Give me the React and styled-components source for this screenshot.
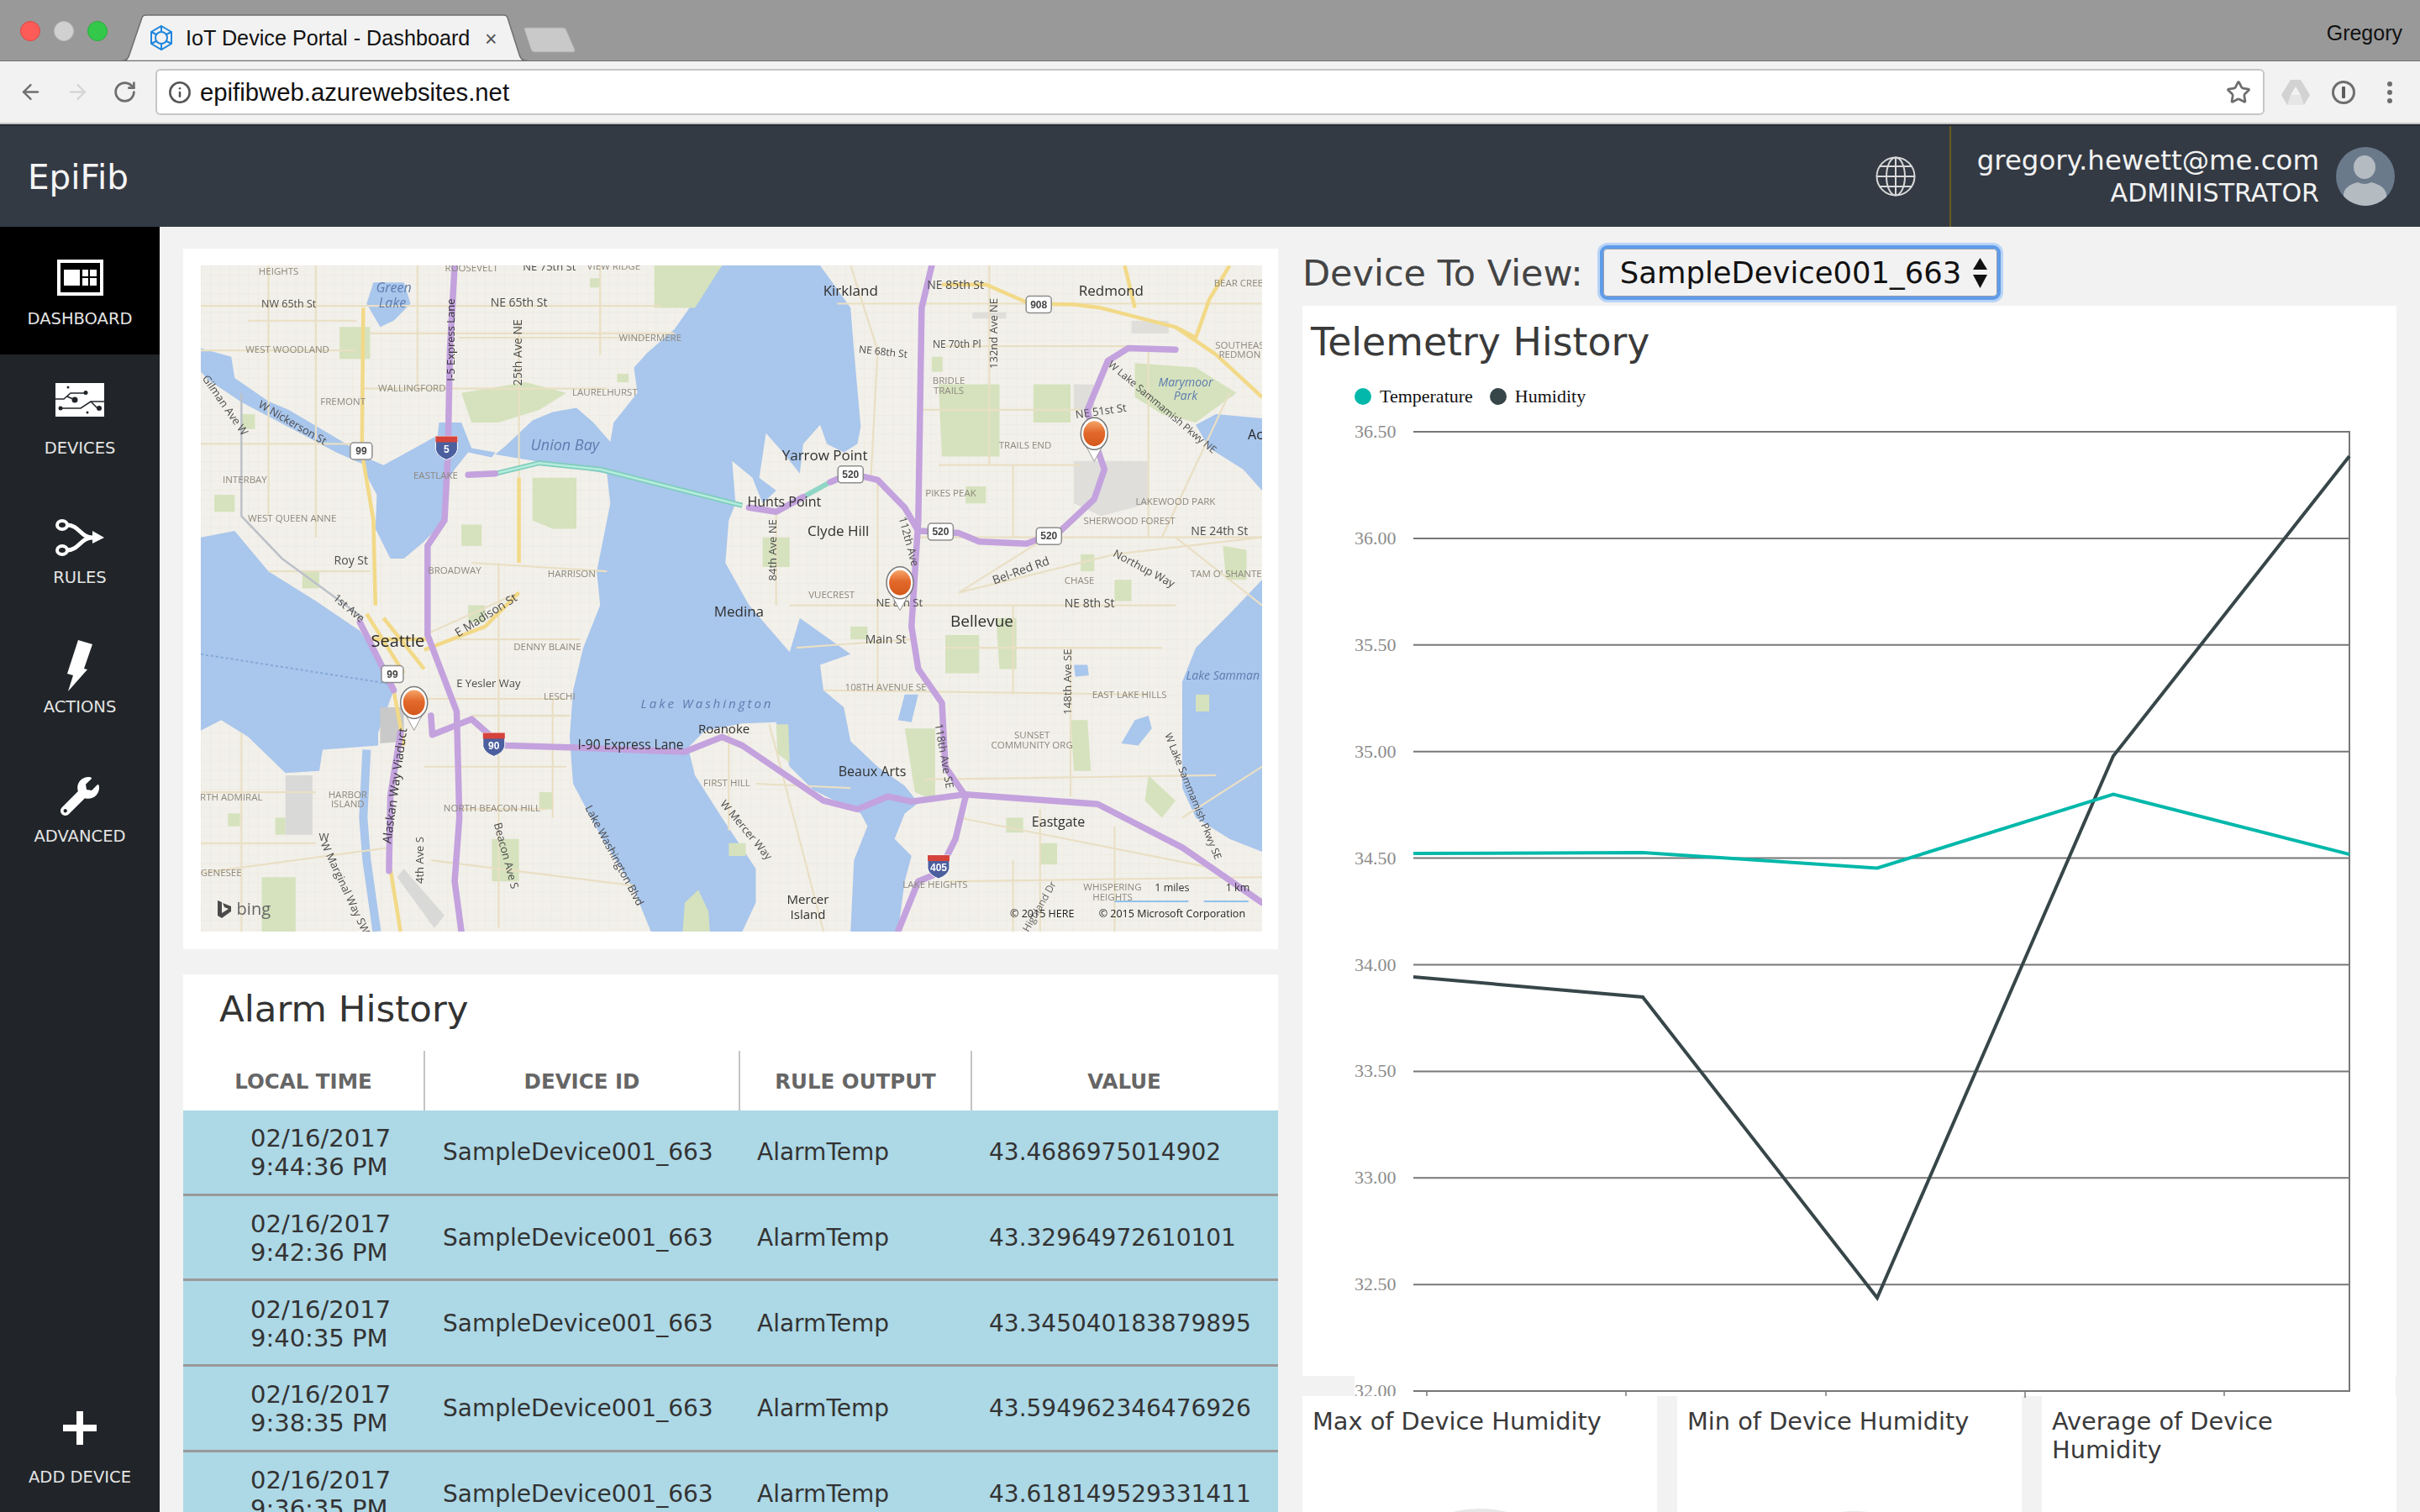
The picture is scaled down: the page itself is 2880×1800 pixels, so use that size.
import React from 'react'
import styled, { createGlobalStyle } from 'styled-components'
import { ArrowLeft, ArrowRight, RotateCw, Info, Star } from 'lucide-react'
import { FaWrench } from 'react-icons/fa'

const UI_FONT = '"DejaVu Sans", Verdana, sans-serif'
const CHROME_FONT = '"Liberation Sans", Arial, sans-serif'
const SERIF_FONT = '"Liberation Serif", "Times New Roman", serif'
const MAP_FONT = '"Open Sans", Arial, sans-serif'

const GlobalStyle = createGlobalStyle`
  html, body { margin: 0; padding: 0; background: #f2f2f2; }
  * { box-sizing: border-box; }
`

const Page = styled.div`
  width: 2880px;
  height: 1800px;
  overflow: hidden;
  display: flex;
  flex-direction: column;
  font-family: ${UI_FONT};
  background: #f2f2f2;
`

/* browser chrome */
const TabStrip = styled.div`
  height: 73px;
  flex: none;
  display: flex;
  align-items: flex-end;
  background: #999999;
  border-bottom: 1px solid #6f6f6f;
`
const Lights = styled.div`
  display: flex;
  gap: 16px;
  margin: 0 17px 23px 24px;
`
const Light = styled.span`
  width: 24px;
  height: 24px;
  border-radius: 50%;
  background: ${({ $color }) => $color};
  border: 1px solid ${({ $edge }) => $edge};
`
const Tab = styled.div`
  position: relative;
  width: 483px;
  height: 56px;
  margin-bottom: -1px;
  padding-left: 31px;
  display: flex;
  align-items: center;
  gap: 13px;
  font-family: ${CHROME_FONT};
  font-size: 25.2px;
  color: #111;
`
const TabShape = styled.svg`
  position: absolute;
  inset: 0;
  z-index: 0;
`
const TabTitle = styled.span`
  position: relative;
  white-space: nowrap;
`
const TabClose = styled.span`
  position: absolute;
  left: 432px;
  top: 15px;
  font-size: 25px;
  color: #555;
`
const NewTab = styled.svg`
  margin: 0 0 9px -6px;
  flex: none;
`
const ProfileName = styled.span`
  margin: 0 21px 18px auto;
  font-family: ${CHROME_FONT};
  font-size: 25px;
  color: #111;
`
const Toolbar = styled.div`
  height: 75px;
  flex: none;
  display: flex;
  align-items: center;
  padding: 0 0 0 22px;
  background: #f2f2f2;
  border-bottom: 2px solid #c4c4c4;
`
const NavIcons = styled.div`
  display: flex;
  gap: 27px;
  color: #6e6e6e;
`
const AddressBar = styled.div`
  width: 2510px;
  height: 55px;
  margin-left: 22px;
  padding: 0 14px 0 13px;
  display: flex;
  align-items: center;
  gap: 10px;
  background: #fff;
  border: 2px solid #c6c6c6;
  border-radius: 6px;
  font-family: ${CHROME_FONT};
  font-size: 29.3px;
  color: #111;
`
const StarSlot = styled.span`
  margin-left: auto;
  display: flex;
  color: #6e6e6e;
`
const Extensions = styled.div`
  display: flex;
  align-items: center;
  margin-left: 20px;
`

/* app header */
const Header = styled.header`
  height: 122px;
  flex: none;
  display: flex;
  align-items: stretch;
  background: #343a44;
  border-top: 2px solid #262a32;
  color: #fff;
`
const Brand = styled.div`
  flex: 1;
  padding-left: 33px;
  font-size: 40.5px;
  line-height: 122px;
  color: #f5f5f5;
`
const GlobeSlot = styled.div`
  width: 88px;
  display: flex;
  align-items: center;
`
const UserBlock = styled.div`
  width: 560px;
  border-left: 2px solid #655d1e;
  display: flex;
  align-items: center;
  justify-content: flex-end;
  gap: 20px;
  padding-right: 30px;
`
const UserText = styled.div`
  text-align: right;
  color: #f2f2f2;
`
const UserMail = styled.div`
  font-size: 32.4px;
  line-height: 38px;
`
const UserRole = styled.div`
  font-size: 30.1px;
  line-height: 39px;
`

/* sidebar */
const Body = styled.div`
  flex: 1;
  min-height: 0;
  display: flex;
`
const Sidebar = styled.nav`
  width: 190px;
  flex: none;
  display: flex;
  flex-direction: column;
  background: #212529;
`
const NavItem = styled.div`
  height: ${({ $active }) => ($active ? 152 : 154)}px;
  flex: none;
  padding-top: ${({ $active }) => ($active ? 30 : 32)}px;
  display: flex;
  flex-direction: column;
  align-items: center;
  background: ${({ $active }) => ($active ? '#000' : 'transparent')};
  ${({ $bottom }) => $bottom && 'margin-top: auto; padding-top: 0; height: 130px;'}
`
const IconSlot = styled.div`
  height: 60px;
  display: flex;
  align-items: center;
  justify-content: center;
  color: #fff;
  transform: translateY(${({ $dy }) => $dy || 0}px);
`
const NavLabel = styled.div`
  margin-top: ${({ $gap }) => $gap || 8}px;
  font-size: 19.5px;
  line-height: 24px;
  color: #e4e4e4;
  white-space: nowrap;
`

/* content */
const Main = styled.main`
  flex: 1;
  display: flex;
  gap: 29px;
  padding: 22px 28px 0;
  min-width: 0;
`
const LeftColumn = styled.div`
  width: 1303px;
  flex: none;
  padding-top: 4px;
  display: flex;
  flex-direction: column;
  gap: 30px;
`
const RightColumn = styled.div`
  width: 1302px;
  flex: none;
  display: flex;
  flex-direction: column;
`
const MapCard = styled.section`
  flex: none;
  padding: 20px;
  padding-left: 21px;
  padding-bottom: 21px;
  background: #fff;
`
const MapSvg = styled.svg`
  display: block;
  width: 1263px;
  height: 793px;
  filter: blur(0.7px);
`
const MapText = styled.text`
  font-family: ${MAP_FONT};
  text-anchor: middle;
  dominant-baseline: middle;
  font-size: ${({ $size }) => $size}px;
  fill: ${({ $fill }) => $fill};
  font-style: ${({ $italic }) => ($italic ? 'italic' : 'normal')};
  letter-spacing: ${({ $spread }) => $spread || 0}px;
`
const ShieldText = styled.text`
  font-family: ${CHROME_FONT};
  font-weight: 700;
  font-size: 12px;
  text-anchor: middle;
  dominant-baseline: middle;
  fill: ${({ $fill }) => $fill || '#444'};
`
const AlarmCard = styled.section`
  flex: none;
  background: #fff;
`
const AlarmTitle = styled.h2`
  margin: 0;
  height: 91px;
  padding-left: 43px;
  font-size: 43.5px;
  font-weight: 400;
  line-height: 82px;
  color: #333;
`
const AlarmGrid = styled.div`
  display: grid;
  grid-template-columns: 288px 375px 276px 364px;
`
const HeadCell = styled.div`
  height: 71px;
  padding-top: 2px;
  display: flex;
  align-items: center;
  justify-content: center;
  font-size: 24.5px;
  font-weight: 700;
  color: #666;
  border-right: 2px solid ${({ $last }) => ($last ? 'transparent' : '#c4c4c4')};
`
const Cell = styled.div`
  height: 101.67px;
  display: flex;
  flex-direction: column;
  justify-content: center;
  padding-top: 2px;
  padding-left: ${({ $pad }) => $pad}px;
  background: #add8e6;
  border-bottom: 3px solid #999;
  font-size: ${({ $size }) => $size || 28}px;
  line-height: 34px;
  color: #333;
  white-space: nowrap;
`
const DeviceBar = styled.div`
  height: 65px;
  flex: none;
  display: flex;
  align-items: center;
  gap: 20px;
  margin-bottom: 7px;
`
const DeviceLabel = styled.div`
  font-size: 43px;
  color: #444;
`
const DeviceSelect = styled.div`
  width: 477px;
  height: 65px;
  padding: 0 12px 0 20px;
  display: flex;
  align-items: center;
  justify-content: space-between;
  background: #f2f2f2;
  border: 4px solid #5f9ce8;
  border-radius: 9px;
  box-shadow: 0 0 0 3px #b9d4f6, inset 0 0 0 1px #8f9db3;
  font-size: 35.4px;
  color: #111;
`
const ChartCard = styled.section`
  height: 1274px;
  flex: none;
  background: #fff;
`
const ChartTitle = styled.h2`
  margin: 0;
  height: 88px;
  padding-left: 10px;
  font-size: 45.8px;
  font-weight: 400;
  line-height: 86px;
  color: #3a3a3a;
`
const Legend = styled.div`
  height: 40px;
  padding-left: 62px;
  display: flex;
  align-items: center;
  font-family: ${SERIF_FONT};
  font-size: 22px;
  color: #111;
`
const LegendDot = styled.span`
  width: 20px;
  height: 20px;
  margin-right: 10px;
  border-radius: 50%;
  background: ${({ $color }) => $color};
`
const LegendLabel = styled.span`
  margin-right: 20px;
`
const ChartSvg = styled.svg`
  display: block;
  width: 1302px;
  height: 1146px;
  overflow: visible;
`
const AxisText = styled.text`
  font-family: ${SERIF_FONT};
  font-size: 22px;
  fill: #8c8c8c;
`
const TileRow = styled.div`
  position: relative;
  z-index: 1;
  margin-top: 24px;
  display: flex;
  gap: 24px;
`
const Tile = styled.div`
  flex: ${({ $narrow }) => ($narrow ? '0 0 410px' : '0 0 422px')};
  height: 300px;
  padding: 13px 12px 0;
  overflow: hidden;
  background: #fff;
`
const TileTitle = styled.div`
  height: ${({ $gap }) => $gap}px;
  font-size: 28.8px;
  line-height: 34px;
  color: #3a3a3a;
`
const GaugeArc = styled.div`
  width: 264px;
  height: 264px;
  margin-left: 67px;
  border-radius: 50%;
  background: #e7e7e7;
`

/* map data, points in the 1568 x 1568 working space of the map */
const SX = 1263 / 1568
const SY = 793 / 1568

const water = [
  '760,0 735,70 700,150 660,205 640,240 645,300 610,370 605,415 580,370 555,335 520,345 490,365 470,395 450,425 435,445 500,462 600,490 605,560 585,720 590,800 565,900 550,1000 545,1110 550,1220 590,1340 640,1470 665,1568 1030,1568 1040,1450 1050,1390 1025,1350 1040,1290 1060,1265 1040,1225 1000,1180 960,1120 950,1040 920,1000 915,940 960,915 885,830 870,910 810,800 775,700 780,600 790,560 785,460 815,500 830,560 850,530 825,500 835,395 860,440 885,490 890,420 915,375 925,420 950,440 970,420 975,380 965,200 960,100 915,0',
  '240,450 270,470 350,400 352,370 385,370 400,430 435,440 430,452 395,440 375,480 360,520 360,600 330,650 300,690 280,690 258,620 260,540 240,480',
  '0,195 45,215 50,265 100,320 130,340 215,420 240,450 240,468 200,440 120,372 60,322 10,268 0,250',
  '0,640 50,625 100,720 170,790 235,860 260,920 285,1000 262,1100 262,1130 180,1140 175,1190 125,1195 70,1110 30,1070 0,1095',
  '255,40 300,40 310,90 285,130 265,145 245,90',
  '1470,375 1500,350 1568,360 1568,530 1540,480 1490,430',
  '1568,740 1520,820 1470,900 1450,980 1450,1230 1470,1300 1520,1350 1568,1380',
  '1380,1070 1400,1060 1405,1090 1385,1130 1360,1125',
  '1290,940 1310,940 1312,965 1292,968',
  '1040,1010 1060,1010 1050,1075 1030,1070',
]
const mercer = '720,1135 745,1095 800,1078 850,1075 870,1180 905,1235 975,1290 985,1320 965,1400 960,1568 800,1568 820,1500 820,1420 770,1300 730,1200'
const parks = [
  '205,145 250,145 250,220 205,220',
  '385,300 480,275 540,300 500,340 440,370 400,370',
  '490,500 555,500 555,620 520,620 490,600',
  '385,610 415,610 415,660 385,660',
  '670,0 770,0 730,100 670,100',
  '1090,280 1180,280 1180,450 1095,450',
  '1230,280 1285,280 1285,370 1230,370',
  '1380,230 1470,240 1530,300 1470,370 1420,350 1380,310',
  '1100,870 1150,870 1150,960 1100,960',
  '1175,830 1205,830 1205,950 1180,950',
  '1040,1090 1085,1090 1085,1260 1055,1240',
  '1285,1070 1310,1070 1315,1190 1290,1190',
  '430,1350 470,1350 470,1450 430,1450',
  '90,1440 140,1440 140,1568 90,1568',
  '712,1568 715,1500 735,1470 750,1520 752,1568',
  '830,640 870,640 870,710 830,710',
  '1510,660 1545,670 1545,740 1515,740',
  '850,1080 868,1080 870,1170 852,1150',
  '1400,1200 1440,1260 1420,1300 1395,1260',
  '150,720 175,720 175,760 150,760', '575,30 590,30 590,52 575,52', '1080,215 1096,215 1096,250 1080,250',
  '1130,520 1160,520 1160,560 1130,560', '60,350 80,350 80,385 60,385', '110,1300 125,1300 125,1340 110,1340',
  '395,800 420,800 420,840 395,840', '1300,680 1320,680 1320,720 1300,720', '960,850 985,850 985,880 960,880',
  '1190,1300 1215,1300 1215,1335 1190,1335', '1240,1360 1265,1360 1265,1410 1240,1410', '500,1240 520,1240 520,1280 500,1280',
  '1350,740 1375,740 1375,790 1350,790', '780,1360 805,1360 805,1390 780,1390', '40,1290 58,1290 58,1320 40,1320',
  '20,540 50,540 50,580 20,580', '615,255 632,255 632,275 615,275', '1470,1010 1490,1010 1490,1050 1470,1050',
]
const blocks = [
  '1290,460 1400,460 1400,560 1330,590 1290,560',
  '1290,280 1320,280 1320,340 1290,340',
  '1140,110 1190,110 1190,125 1140,125',
  '1375,130 1430,130 1430,160 1375,160',
]
const arterials = [
  '0,95 680,95', '0,200 230,200', '240,290 600,290', '940,90 1568,90', '1060,640 1568,640',
  '870,800 1440,800', '330,1020 540,1020', '920,1000 1400,1010', '1120,770 1350,680 1568,640',
  '470,130 470,700', '170,0 170,640', '1165,0 1165,470', '1285,900 1285,1250', '1000,500 1000,1000',
  '850,580 850,800', '400,700 600,720', '1070,1210 1500,1200', '0,1430 280,1370', '330,1180 540,1180',
  '380,1280 510,1280', '820,1220 960,1230', '1200,1400 1200,1568', '1350,1320 1350,1568', '590,0 590,210',
  '330,870 470,770', '100,720 250,720', '1400,200 1400,640', '1520,300 1420,640',
  '100,0 100,590', '320,0 320,290', '0,420 230,420', '380,170 660,170', '250,160 700,160', '70,130 230,130',
  '960,0 1000,200 990,500', '1200,470 1200,640', '1090,470 1300,470', '1060,340 1300,340', '1100,190 1380,190',
  '1440,640 1568,800', '1250,640 1120,770', '880,900 1050,880', '1100,900 1420,900', '1200,800 1200,1010',
  '380,880 560,880', '400,1060 545,1060', '440,700 440,1560', '520,1020 520,1300', '340,1400 640,1460',
  '170,1240 0,1240', '60,1100 60,1568', '0,1360 170,1360', '780,1100 780,1330', '840,1080 920,1568',
  '1120,1300 1500,1420', '1100,1450 1568,1440', '1240,1280 1240,1568', '1450,1300 1568,1180',
]
const yellows = [
  '240,100 238,440 255,600 258,800', '330,905 420,850 470,770', '285,1000 300,1130', '280,1420 295,1568',
  '1095,45 1160,45 1225,90 1290,92 1330,100 1440,145 1470,170 1490,80 1520,0', '1365,0 1380,100',
  '1500,210 1568,310', '470,500 470,700', '245,820 300,960', '270,830 330,950', '250,880 340,880', '1440,145 1500,210',
]
const highways = [
  '375,0 368,200 365,450 360,600 335,660 335,870 378,1050 382,1300 375,1450 385,1568',
  '235,840 265,935 285,1000', '295,1100 280,1250 278,1425',
  '340,1060 342,1105 400,1068 430,1110 450,1130 555,1135 715,1145 770,1110 800,1130 920,1260 970,1280 1015,1250 1050,1262 1130,1245 1325,1268 1450,1370 1568,1500',
  '1080,0 1065,100 1060,600 1050,850 1060,950 1095,1030 1100,1180 1130,1250 1115,1350 1090,1430 1060,1450 1030,1568',
  '395,493 435,490', '810,570 850,580 890,545',
  '930,510 960,490 1000,505 1040,570 1060,625 1120,630 1150,650 1220,655 1270,625 1320,550 1335,480 1320,410 1310,340 1340,225 1370,195 1440,198',
]
const CAPS = ['#8d887e', 11.5]
const STREET = ['#4c4c4c', 13]
const CITY = ['#303030', 17]
const labels = [
  ['HEIGHTS', 115, 15, CAPS], ['ROOSEVELT', 400, 8, CAPS], ['NE 75th St', 515, 5, STREET], ['VIEW RIDGE', 610, 3, CAPS],
  ['NW 65th St', 130, 93, ['#4c4c4c', 12.5]], ['NE 65th St', 470, 90, ['#4c4c4c', 14]], ['25th Ave NE', 470, 205, ['#4c4c4c', 14], -90],
  ['I-5 Express Lane', 370, 175, ['#333', 13], -90], ['WEST WOODLAND', 128, 200, CAPS], ['WINDERMERE', 664, 172, CAPS],
  ['WALLINGFORD', 312, 290, CAPS], ['LAURELHURST', 597, 300, CAPS], ['FREMONT', 210, 323, CAPS], ['INTERBAY', 65, 507, CAPS],
  ['Gilman Ave W', 35, 330, STREET, 55], ['W Nickerson St', 135, 372, STREET, 30], ['EASTLAKE', 347, 496, CAPS],
  ['WEST QUEEN ANNE', 135, 597, CAPS], ['Roy St', 222, 697, ['#4c4c4c', 14]], ['BROADWAY', 375, 720, CAPS], ['HARRISON', 548, 727, CAPS],
  ['1st Ave', 218, 808, STREET, 40], ['E Madison St', 422, 825, ['#4c4c4c', 14], -32], ['Seattle', 291, 888, ['#2b2b2b', 20]],
  ['DENNY BLAINE', 512, 900, CAPS], ['E Yesler Way', 425, 985, STREET], ['LESCHI', 530, 1017, CAPS],
  ['I-90 Express Lane', 635, 1130, ['#2f2f2f', 15.5]], ['Alaskan Way Viaduct', 288, 1225, ['#333', 14.5], -82], ['4th Ave S', 325, 1400, STREET, -90],
  ['NORTH BEACON HILL', 430, 1280, CAPS], ['HARBOR', 217, 1247, CAPS], ['ISLAND', 217, 1270, CAPS], ['RTH ADMIRAL', 45, 1253, CAPS],
  ['GENESEE', 30, 1432, CAPS], ['W Marginal Way SW', 212, 1465, STREET, 65], ['Beacon Ave S', 450, 1390, STREET, 75],
  ['Lake Washington Blvd', 610, 1390, STREET, 62], ['W', 182, 1347, STREET],
  ['Kirkland', 960, 62, CITY], ['NE 85th St', 1115, 47, ['#4c4c4c', 14]], ['Redmond', 1345, 62, CITY], ['BEAR CREE', 1533, 43, CAPS],
  ['132nd Ave NE', 1173, 160, STREET, -90], ['NE 70th Pl', 1117, 187, ['#4c4c4c', 12]], ['NE 68th St', 1008, 205, ['#4c4c4c', 12], 6],
  ['BRIDLE', 1105, 272, CAPS], ['TRAILS', 1105, 296, CAPS], ['SOUTHEAS', 1535, 190, CAPS], ['REDMON', 1535, 212, CAPS],
  ['W Lake Sammamish Pkwy NE', 1420, 335, ['#4c4c4c', 12], 40], ['NE 51st St', 1330, 345, STREET, -8], ['Ac', 1558, 400, ['#222', 16]],
  ['TRAILS END', 1218, 424, CAPS], ['Yarrow Point', 922, 450, CITY], ['Hunts Point', 862, 560, ['#303030', 16]], ['PIKES PEAK', 1108, 537, CAPS],
  ['LAKEWOOD PARK', 1440, 558, CAPS], ['SHERWOOD FOREST', 1372, 603, CAPS], ['Clyde Hill', 942, 628, CITY], ['84th Ave NE', 846, 670, STREET, -90],
  ['112th Ave', 1045, 650, STREET, 75], ['NE 24th St', 1505, 628, ['#4c4c4c', 14]], ['Northup Way', 1393, 715, STREET, 28],
  ['Bel-Red Rd', 1212, 720, ['#4c4c4c', 14], -20], ['CHASE', 1298, 743, CAPS], ["TAM O' SHANTE", 1515, 727, CAPS], ['VUECREST', 932, 777, CAPS],
  ['NE 8th St', 1032, 795, STREET], ['NE 8th St', 1313, 797, ['#4c4c4c', 14]], ['Medina', 795, 818, CITY], ['Bellevue', 1154, 840, ['#303030', 19]],
  ['Main St', 1012, 883, ['#4c4c4c', 14]], ['148th Ave SE', 1282, 980, STREET, -90], ['108TH AVENUE SE', 1012, 995, CAPS], ['EAST LAKE HILLS', 1372, 1012, CAPS],
  ['SUNSET', 1228, 1107, CAPS], ['COMMUNITY ORG', 1228, 1130, CAPS], ['Roanoke', 773, 1093, ['#303030', 15]], ['118th Ave SE', 1097, 1155, STREET, 80],
  ['Beaux Arts', 992, 1193, ['#303030', 16]], ['FIRST HILL', 777, 1220, CAPS], ['W Mercer Way', 805, 1330, STREET, 50], ['Eastgate', 1267, 1312, ['#303030', 16]],
  ['W Lake Sammamish Pkwy SE', 1465, 1250, ['#4c4c4c', 12], 68], ['LAKE HEIGHTS', 1085, 1460, CAPS], ['WHISPERING', 1347, 1465, CAPS], ['HEIGHTS', 1347, 1488, CAPS],
  ['Mercer', 897, 1495, ['#303030', 15]], ['Island', 897, 1530, ['#303030', 15]], ['Highland Dr', 1240, 1510, ['#666', 12], -60],
  ['1 miles', 1435, 1467, ['#333', 12.5]], ['1 km', 1532, 1467, ['#333', 12.5]], ['© 2015 HERE', 1243, 1528, ['#222', 12.5]], ['© 2015 Microsoft Corporation', 1435, 1528, ['#222', 12.5]],
  ['bing', 78, 1517, ['#666', 20]],
]
const waterLabels = [
  ['Green', 285, 55, 16], ['Lake', 283, 90, 16], ['Union Bay', 538, 425, 18], ['Lake Washington', 748, 1035, 15, 3],
  ['Lake Samman', 1510, 968, 14], ['Marymoor', 1455, 278, 14], ['Park', 1455, 308, 14],
]
const shields = [['99', 237, 437], ['99', 283, 962], ['908', 1238, 92], ['520', 960, 492], ['520', 1093, 627], ['520', 1253, 637]]
const interstates = [['5', 363, 422], ['90', 433, 1120], ['405', 1090, 1408]]
const pins = [[1320, 392], [1033, 743], [315, 1025]]

const SeattleMap = () => (
  <MapSvg viewBox="0 0 1263 793">
    <defs>
      <pattern id="streets" width="14" height="22" patternUnits="userSpaceOnUse">
        <path d="M0 0H14M0 0V22" stroke="#e6e2d8" strokeWidth="1" fill="none" />
      </pattern>
      <linearGradient id="pinFill" x1="0" y1="0" x2="0" y2="1">
        <stop offset="0" stopColor="#f6a468" />
        <stop offset="0.45" stopColor="#e2692b" />
        <stop offset="1" stopColor="#d4581c" />
      </linearGradient>
    </defs>
    <g transform={`scale(${SX} ${SY})`}>
      <rect width="1568" height="1568" fill="#f2f0ea" />
      <rect width="1568" height="1568" fill="url(#streets)" />
      {blocks.map((p) => <polygon key={p} points={p} fill="#dfdedb" />)}
      {water.map((p) => <polygon key={p} points={p} fill="#a9c6ec" />)}
      <polygon points={mercer} fill="#f2f0ea" />
      <polygon points={mercer} fill="url(#streets)" />
      <polygon points="125,1200 165,1200 165,1340 125,1340" fill="#d9d9d8" />
      <polygon points="265,1040 300,1040 300,1120 265,1125" fill="#c9c9c9" />
      <polygon points="300,1420 360,1530 345,1560 290,1440" fill="#d9d9d8" />
      <polyline points="245,1140 240,1300 245,1400 260,1568" fill="none" stroke="#a9c6ec" strokeWidth="10" vectorEffect="non-scaling-stroke" />
      {parks.map((p) => <polygon key={p} points={p} fill="#d5e2bd" />)}
      {arterials.map((p) => (
        <polyline key={p} points={p} fill="none" stroke="#e9dfc4" strokeWidth="2.2" vectorEffect="non-scaling-stroke" />
      ))}
      <polyline points="60,300 60,590 120,690 240,830" fill="none" stroke="#bcc0c9" strokeWidth="2.5" vectorEffect="non-scaling-stroke" />
      <polyline points="0,915 280,985" fill="none" stroke="#84a8d8" strokeWidth="2" strokeDasharray="3 3" vectorEffect="non-scaling-stroke" />
      {yellows.map((p) => (
        <polyline key={p} points={p} fill="none" stroke="#f2d987" strokeWidth="4.5" strokeLinejoin="round" vectorEffect="non-scaling-stroke" />
      ))}
      <polyline points="435,490 500,465 590,480 800,565" fill="none" stroke="#7fcdbd" strokeWidth="6" strokeLinejoin="round" vectorEffect="non-scaling-stroke" />
      <polyline points="435,490 500,465 590,480 800,565" fill="none" stroke="#b5ecdd" strokeWidth="2.5" strokeLinejoin="round" vectorEffect="non-scaling-stroke" />
      <polyline points="890,545 930,510" fill="none" stroke="#8fd6c6" strokeWidth="6" vectorEffect="non-scaling-stroke" />
      {highways.map((p) => (
        <polyline key={p} points={p} fill="none" stroke="#c3a2de" strokeWidth="7.5" strokeLinejoin="round" strokeLinecap="round" vectorEffect="non-scaling-stroke" />
      ))}
    </g>
    {labels.map(([text, u, v, [fill, size], rot]) => {
      const x = u * SX
      const y = v * SY
      return (
        <MapText key={`${text}${u}`} x={x} y={y} $size={size} $fill={fill} transform={rot ? `rotate(${rot} ${x} ${y})` : undefined}>
          {text}
        </MapText>
      )
    })}
    {waterLabels.map(([text, u, v, size, spread]) => (
      <MapText key={text} x={u * SX} y={v * SY} $size={size} $fill="#5d7cb0" $spread={spread} $italic>
        {text}
      </MapText>
    ))}
    {shields.map(([num, u, v]) => (
      <g key={`${num}${u}`} transform={`translate(${u * SX} ${v * SY})`}>
        <rect x={num.length > 2 ? -15 : -13} y="-10" width={num.length > 2 ? 30 : 26} height="20" rx="4" fill="#fff" stroke="#8d8d8d" strokeWidth="1.5" />
        <ShieldText y="1">{num}</ShieldText>
      </g>
    ))}
    {interstates.map(([num, u, v]) => (
      <g key={num} transform={`translate(${u * SX} ${v * SY})`}>
        <path d="M-13 -10H13V6Q11 14 0 18Q-11 14 -13 6Z" fill="#4b5f9e" stroke="#fff" strokeWidth="1" />
        <path d="M-13 -10H13V-3H-13Z" fill="#d5433a" />
        <ShieldText y="6" $fill="#fff">{num}</ShieldText>
      </g>
    ))}
    <rect x={1350 * SX} y={1495 * SY} width="88" height="2" fill="#8fc0ee" />
    <rect x={1482 * SX} y={1495 * SY} width="53" height="2" fill="#8fc0ee" />
    <path d="M20 756L25 758V771L33 766L28 764L26 759L36 763V769L25 777L20 774Z" fill="#4a4a4a" />
    {pins.map(([u, v]) => (
      <g key={u} transform={`translate(${u * SX} ${v * SY + 3})`}>
        <path d="M-13 8L0 32L13 8Z" fill="#fff" stroke="#999" strokeWidth="1" />
        <ellipse rx="16" ry="19" cy="-1" fill="#fff" stroke="#777" strokeWidth="1.5" />
        <ellipse rx="13" ry="15" cy="-1" fill="url(#pinFill)" />
      </g>
    ))}
  </MapSvg>
)

/* alarm rows */
const alarms = [
  ['02/16/2017', '9:44:36 PM', '43.4686975014902'],
  ['02/16/2017', '9:42:36 PM', '43.32964972610101'],
  ['02/16/2017', '9:40:35 PM', '43.345040183879895'],
  ['02/16/2017', '9:38:35 PM', '43.594962346476926'],
  ['02/16/2017', '9:36:35 PM', '43.618149529331411'],
]
const columns = ['LOCAL TIME', 'DEVICE ID', 'RULE OUTPUT', 'VALUE']

/* chart, in page coordinates */
const yTicks = ['36.50', '36.00', '35.50', '35.00', '34.50', '34.00', '33.50', '33.00', '32.50', '32.00']
const xTicks = [1698, 1935, 2173, 2410, 2647]
const tempLine = '1682,1016 1955,1015 2234,1033.5 2515,945.5 2796,1017'
const humidityLine = '1682,1163 1955,1187 2234,1545 2515,900 2796,543'

const TelemetryChart = () => (
  <ChartSvg viewBox="1550 492 1302 1146">
    <rect x="1612" y="1630" width="1239" height="32" fill="#fff" />
    {yTicks.map((label, i) => {
      const y = 514 + i * 126.9
      return (
        <g key={label}>
          <line x1="1682" x2="2796" y1={y} y2={y} stroke="#777" strokeWidth="2" />
          <AxisText x="1612" y={y + 7}>{label}</AxisText>
        </g>
      )
    })}
    <line x1="2796" x2="2796" y1="513" y2="1657" stroke="#777" strokeWidth="2" />
    {xTicks.map((x) => <line key={x} x1={x} x2={x} y1="1656" y2="1664" stroke="#777" strokeWidth="1.5" />)}
    <polyline points={humidityLine} fill="none" stroke="#374649" strokeWidth="4" />
    <polyline points={tempLine} fill="none" stroke="#01b8aa" strokeWidth="4" />
  </ChartSvg>
)

/* sidebar and toolbar drawings */
const DashboardIcon = () => (
  <svg width="55" height="43" viewBox="0 0 55 43">
    <rect x="2" y="2" width="51" height="39" fill="#000" stroke="#fff" strokeWidth="4" />
    <rect x="8" y="12" width="19" height="19" fill="#fff" />
    <rect x="30" y="12" width="7" height="8" fill="#fff" />
    <rect x="39" y="12" width="8" height="8" fill="#fff" />
    <rect x="30" y="22" width="7" height="9" fill="#fff" />
    <rect x="39" y="22" width="8" height="9" fill="#fff" />
  </svg>
)
const DevicesIcon = () => (
  <svg width="58" height="40" viewBox="0 0 58 40">
    <rect width="58" height="40" fill="#fff" />
    <path d="M0 19H10L18 12H36M14 16L23 20M6 30H30L42 22H58M42 22L50 30" fill="none" stroke="#212529" strokeWidth="1.6" />
    <circle cx="36" cy="11.5" r="2.5" fill="#212529" />
    <circle cx="23" cy="20" r="3.5" fill="#212529" />
    <circle cx="6" cy="30" r="2.5" fill="#212529" />
    <circle cx="52" cy="30" r="3" fill="#212529" />
    <circle cx="15" cy="5" r="1.5" fill="#212529" />
    <circle cx="38" cy="35" r="1.5" fill="#212529" />
  </svg>
)
const RulesIcon = () => (
  <svg width="58" height="45" viewBox="0 0 58 45">
    <ellipse cx="8" cy="7" rx="6" ry="5" fill="none" stroke="#fff" strokeWidth="4" />
    <ellipse cx="8" cy="37" rx="6" ry="5" fill="none" stroke="#fff" strokeWidth="4" />
    <path d="M14 7C28 7 30 22 44 22M14 37C28 37 30 22 44 22" fill="none" stroke="#fff" strokeWidth="5" />
    <polygon points="44,14 58,22 44,29" fill="#fff" />
  </svg>
)
const ActionsIcon = () => (
  <svg width="30" height="61" viewBox="0 0 30 61">
    <polygon points="13,0 30,5 20,34 24,35 1,61 7,42 0,40" fill="#fff" />
  </svg>
)
const PlusIcon = () => (
  <svg width="40" height="40" viewBox="0 0 40 40">
    <path d="M16 0H24V16H40V24H24V40H16V24H0V16H16Z" fill="#fff" />
  </svg>
)
const GlobeIcon = () => (
  <svg width="48" height="48" viewBox="0 0 48 48" fill="none" stroke="#d8d8d8" strokeWidth="2">
    <circle cx="24" cy="24" r="22.5" />
    <ellipse cx="24" cy="24" rx="11" ry="22.5" />
    <path d="M24 1.5V46.5M1.5 24H46.5M5 12H43M5 36H43" />
  </svg>
)
const Favicon = () => (
  <svg width="32" height="32" viewBox="0 0 32 32" fill="none" stroke="#1f86dd" strokeWidth="2" style={{ position: 'relative' }}>
    <polygon points="16,2 28,9 28,23 16,30 4,23 4,9" />
    <circle cx="16" cy="16" r="7" />
    <path d="M16 2V9M28 9L22 12M28 23L22 20M16 30V23M4 23L10 20M4 9L10 12" />
  </svg>
)
const DriveIcon = () => (
  <svg width="34" height="30" viewBox="0 0 34 30" style={{ display: 'block' }}>
    <polygon points="11,0 23,0 34,18 27,30 7,30 0,18" fill="#d2d2d2" />
    <polygon points="11,18 23,18 27,30 7,30" fill="#e6e6e6" />
    <polygon points="17,8 23,18 11,18" fill="#f2f2f2" />
  </svg>
)
const OnePasswordIcon = () => (
  <svg width="30" height="30" viewBox="0 0 30 30" style={{ display: 'block', margin: '0 36px 0 25px' }}>
    <circle cx="15" cy="15" r="12.5" fill="#f2f2f2" stroke="#6e6e6e" strokeWidth="3" />
    <rect x="13" y="8" width="4" height="14" rx="1" fill="#5c5c5c" />
  </svg>
)
const DotsIcon = () => (
  <svg width="8" height="28" viewBox="0 0 8 28" style={{ display: 'block' }}>
    <circle cx="4" cy="4" r="3" fill="#6e6e6e" />
    <circle cx="4" cy="14" r="3" fill="#6e6e6e" />
    <circle cx="4" cy="24" r="3" fill="#6e6e6e" />
  </svg>
)
const Avatar = () => (
  <svg width="70" height="70" viewBox="0 0 70 70" style={{ flex: 'none' }}>
    <defs>
      <clipPath id="avatarClip"><circle cx="35" cy="35" r="35" /></clipPath>
    </defs>
    <circle cx="35" cy="35" r="35" fill="#6a7a8b" />
    <g clipPath="url(#avatarClip)" fill="#b4bbc1">
      <ellipse cx="34" cy="24" rx="13" ry="14" />
      <path d="M9 70V56Q10 46 26 42Q34 46 42 42Q58 46 60 56V70Z" />
    </g>
  </svg>
)
const SelectArrows = () => (
  <svg width="17" height="36" viewBox="0 0 17 36" style={{ display: 'block' }}>
    <polygon points="8.5,0 17,14 0,14" fill="#111" />
    <polygon points="0,20 17,20 8.5,36" fill="#111" />
  </svg>
)

const navItems = [
  { label: 'DASHBOARD', icon: <DashboardIcon />, active: true },
  { label: 'DEVICES', icon: <DevicesIcon />, dy: -8 },
  { label: 'RULES', icon: <RulesIcon />, dy: 2 },
  { label: 'ACTIONS', icon: <ActionsIcon /> },
  { label: 'ADVANCED', icon: <FaWrench size={46} />, dy: 2 },
]

export default function App() {
  return (
    <Page>
      <GlobalStyle />
      <TabStrip>
        <Lights>
          <Light $color="#fc5b57" $edge="#df4744" />
          <Light $color="#d0d0d0" $edge="#bcbcbc" />
          <Light $color="#34c84a" $edge="#2aac3c" />
        </Lights>
        <Tab>
          <TabShape width="483" height="56" viewBox="0 0 483 56">
            <path d="M0 55.5Q7 55.5 9 48L24 4Q25 1 29 1H455Q458 1 459 4L473 48Q475 55.5 483 55.5Z" fill="#f2f2f2" stroke="#6f6f6f" strokeWidth="1.5" />
          </TabShape>
          <Favicon />
          <TabTitle>IoT Device Portal - Dashboard</TabTitle>
          <TabClose>×</TabClose>
        </Tab>
        <NewTab width="64" height="31" viewBox="0 0 64 31">
          <path d="M2 3Q1 1 4 1H48Q51 1 52 4L62 27Q63 30 60 30H14Q11 30 10 27Z" fill="#c9c9c9" stroke="#a8a8a8" />
        </NewTab>
        <ProfileName>Gregory</ProfileName>
      </TabStrip>
      <Toolbar>
        <NavIcons>
          <ArrowLeft size={29} strokeWidth={2} />
          <ArrowRight size={29} strokeWidth={2} color="#d6d6d6" />
          <RotateCw size={29} strokeWidth={2.2} />
        </NavIcons>
        <AddressBar>
          <Info size={28} color="#555" strokeWidth={2.2} />
          <span>epifibweb.azurewebsites.net</span>
          <StarSlot><Star size={30} strokeWidth={2.2} /></StarSlot>
        </AddressBar>
        <Extensions>
          <DriveIcon />
          <OnePasswordIcon />
          <DotsIcon />
        </Extensions>
      </Toolbar>
      <Header>
        <Brand>EpiFib</Brand>
        <GlobeSlot><GlobeIcon /></GlobeSlot>
        <UserBlock>
          <UserText>
            <UserMail>gregory.hewett@me.com</UserMail>
            <UserRole>ADMINISTRATOR</UserRole>
          </UserText>
          <Avatar />
        </UserBlock>
      </Header>
      <Body>
        <Sidebar>
          {navItems.map((item) => (
            <NavItem key={item.label} $active={item.active}>
              <IconSlot $dy={item.dy}>{item.icon}</IconSlot>
              <NavLabel>{item.label}</NavLabel>
            </NavItem>
          ))}
          <NavItem $bottom>
            <IconSlot><PlusIcon /></IconSlot>
            <NavLabel $gap={17}>ADD DEVICE</NavLabel>
          </NavItem>
        </Sidebar>
        <Main>
          <LeftColumn>
            <MapCard><SeattleMap /></MapCard>
            <AlarmCard>
              <AlarmTitle>Alarm History</AlarmTitle>
              <AlarmGrid>
                {columns.map((c, i) => <HeadCell key={c} $last={i === 3}>{c}</HeadCell>)}
                {alarms.map(([date, time, value]) => (
                  <React.Fragment key={time}>
                    <Cell $pad={80} $size={29}><div>{date}</div><div>{time}</div></Cell>
                    <Cell $pad={21}>SampleDevice001_663</Cell>
                    <Cell $pad={20}>AlarmTemp</Cell>
                    <Cell $pad={20}>{value}</Cell>
                  </React.Fragment>
                ))}
              </AlarmGrid>
            </AlarmCard>
          </LeftColumn>
          <RightColumn>
            <DeviceBar>
              <DeviceLabel>Device To View:</DeviceLabel>
              <DeviceSelect>
                <span>SampleDevice001_663</span>
                <SelectArrows />
              </DeviceSelect>
            </DeviceBar>
            <ChartCard>
              <ChartTitle>Telemetry History</ChartTitle>
              <Legend>
                <LegendDot $color="#01b8aa" />
                <LegendLabel>Temperature</LegendLabel>
                <LegendDot $color="#374649" />
                <LegendLabel>Humidity</LegendLabel>
              </Legend>
              <TelemetryChart />
            </ChartCard>
            <TileRow>
              <Tile>
                <TileTitle $gap={121}>Max of Device Humidity</TileTitle>
                <GaugeArc />
              </Tile>
              <Tile $narrow>
                <TileTitle $gap={124}>Min of Device Humidity</TileTitle>
                <GaugeArc />
              </Tile>
              <Tile>
                <TileTitle $gap={68}>Average of Device Humidity</TileTitle>
              </Tile>
            </TileRow>
          </RightColumn>
        </Main>
      </Body>
    </Page>
  )
}
